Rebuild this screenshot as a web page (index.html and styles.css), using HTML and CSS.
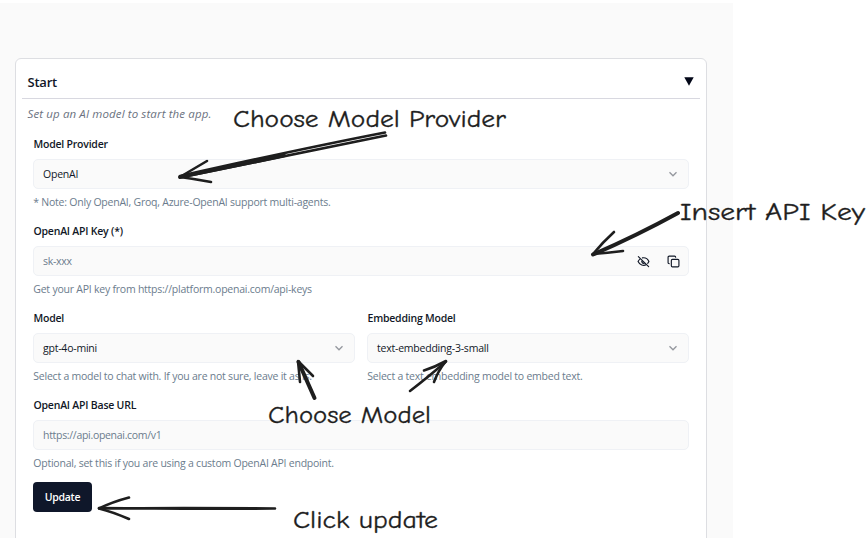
FILE: index.html
```html
<!DOCTYPE html>
<html lang="en">
<head>
<meta charset="utf-8">
<title>Start</title>
<link rel="stylesheet" href="styles.css">
</head>
<body>
<main class="page">
  <section class="card">
    <header class="card-header">
      <h1>Start</h1>
      <svg class="caret" viewBox="0 0 10 9"><path d="M.3.3h9.400L5 8.700z"/></svg>
    </header>
    <p class="intro">Set up an AI model to start the app.</p>
    <form class="fields">
      <div class="field">
        <label>Model Provider</label>
        <div class="control"><span>OpenAI</span><svg class="chevron" viewBox="0 0 10 10"><path d="M1.500 3.200 5 6.800l3.500-3.600"/></svg></div>
        <p class="hint">* Note: Only OpenAI, Groq, Azure-OpenAI support multi-agents.</p>
      </div>
      <div class="field">
        <label>OpenAI API Key (*)</label>
        <div class="control placeholder"><span>sk-xxx</span>
          <span class="tools">
            <svg class="tool" viewBox="0 0 24 24"><path d="m2.500 3 19 18.500M10 5.200C15.500 4.300 20 7.500 22 12a12 12 0 0 1-2.200 3.300M6.300 6.700A12 12 0 0 0 2 12c3 6.500 10 8.800 15.500 5.600M9.800 10a3 3 0 0 0 4.300 4.300"/></svg>
            <svg class="tool" viewBox="0 0 24 24"><rect x="8" y="8" width="14" height="14" rx="2"/><path d="M4 16c-1.100 0-2-.9-2-2V4c0-1.100.9-2 2-2h10c1.100 0 2 .9 2 2"/></svg>
          </span>
        </div>
        <p class="hint">Get your API key from https://platform.openai.com/api-keys</p>
      </div>
      <div class="columns">
        <div class="field">
          <label>Model</label>
          <div class="control"><span>gpt-4o-mini</span><svg class="chevron" viewBox="0 0 10 10"><path d="M1.500 3.200 5 6.800l3.500-3.600"/></svg></div>
          <p class="hint">Select a model to chat with. If you are not sure, leave it as is.</p>
        </div>
        <div class="field">
          <label>Embedding Model</label>
          <div class="control"><span>text-embedding-3-small</span><svg class="chevron" viewBox="0 0 10 10"><path d="M1.500 3.200 5 6.800l3.500-3.600"/></svg></div>
          <p class="hint">Select a text embedding model to embed text.</p>
        </div>
      </div>
      <div class="field">
        <label>OpenAI API Base URL</label>
        <div class="control placeholder"><span>https://api.openai.com/v1</span></div>
        <p class="hint">Optional, set this if you are using a custom OpenAI API endpoint.</p>
      </div>
      <button class="update" type="button">Update</button>
    </form>
  </section>
</main>
<svg class="annotations" viewBox="0 0 866 538">
  <g class="notes">
    <text x="233" y="126.500" textLength="273" lengthAdjust="spacingAndGlyphs">Choose Model Provider</text>
    <text x="680" y="220" textLength="185" lengthAdjust="spacingAndGlyphs">Insert API Key</text>
    <text x="268" y="423" textLength="163" lengthAdjust="spacingAndGlyphs">Choose Model</text>
    <text x="293" y="528" textLength="145" lengthAdjust="spacingAndGlyphs">Click update</text>
  </g>
  <g class="arrows">
    <path d="M385 132.500 Q300 149 180 176M386 135.500 Q290 155 180 177.500"/>
    <path class="taper" d="M284 155.500 180 177"/>
    <path d="M207 161 Q190 171 180 177 Q195 179 211 182"/>
    <path class="bold" d="M678 213 Q636 236 593 254.500"/>
    <path d="M614 232 Q603 242 593 254 Q607 253 623 251"/>
    <path class="bold" d="M314.500 398 Q307 381 298.500 362"/>
    <path d="M300 382 Q299 371 298 361L313 376"/>
    <path d="M410 391 Q427 378 446 361.500"/>
    <path d="M424 370.500 Q435 367 446 361 Q438 371 434 382"/>
    <path d="M275 508.500 Q180 507.500 99 508.500M273 508.500Q180 509 99 508"/>
    <path d="M129 497.500 Q112 502 99 508.500 Q113 512 129 519"/>
  </g>
</svg>
</body>
</html>
```
FILE: styles.css
```css
* { box-sizing: border-box; }
body {
  margin: 0;
  height: 538px;
  overflow: hidden;
  background: #fff;
  color: #111827;
  font-family: "Open Sans", "Noto Sans", sans-serif;
  font-size: 10.5px;
  letter-spacing: -0.22px;
}
h1, p { margin: 0; }
.page {
  width: 733px;
  height: 535px;
  margin-top: 3px;
  padding: 55px 26px 0 15px;
  background: #fafafa;
  overflow: hidden;
}
.card {
  height: 520px;
  padding: 0 6px;
  border: 1px solid #dddee2;
  border-radius: 6px;
  background: #fff;
}
.card-header {
  display: flex;
  align-items: center;
  justify-content: space-between;
  height: 40px;
  padding: 6px 6px 0 5.5px;
  border-bottom: 1px solid #d8d8e0;
}
h1 { font-size: 13px; font-weight: 600; line-height: 18px; }
.caret { width: 10px; height: 9px; fill: #020617; }
.intro {
  height: 34px;
  padding: 6px 0 0 5.5px;
  color: #6b7280;
  font-size: 11.5px;
  font-style: italic;
  letter-spacing: 0.12px;
  line-height: 18px;
}
.fields { padding: 3px 11px 0 11px; }
.field { height: 87px; min-width: 0; }
label { display: block; height: 23px; padding-left: 0.5px; font-weight: 600; line-height: 17px; }
.control {
  display: flex;
  align-items: center;
  justify-content: space-between;
  height: 30px;
  padding: 0 10px 0 9px;
  border: 1px solid #eff1f5;
  border-radius: 5px;
  background: #fafafa;
}
.placeholder { color: #6b7c8d; letter-spacing: -0.3px; }
.hint { margin-top: 4px; padding-left: 0.3px; color: #6b7c8d; letter-spacing: -0.23px; line-height: 18px; white-space: nowrap; }
.chevron { width: 10px; height: 10px; fill: none; stroke: #94979d; stroke-width: 1.3; }
.tools { display: flex; gap: 17px; margin-right: -2px; }
.tool {
  width: 13px;
  height: 13px;
  fill: none;
  stroke: #111827;
  stroke-width: 2.1;
  stroke-linecap: round;
  stroke-linejoin: round;
}
.columns { display: grid; grid-template-columns: 1fr 1fr; gap: 12px; }
.update {
  display: block;
  width: 59px;
  height: 30px;
  margin-top: -2px;
  padding: 0;
  border: 0;
  border-radius: 4px;
  background: #0f172a;
  color: #fff;
  font: 600 10.5px "Open Sans", sans-serif;
  letter-spacing: -0.25px;
}
.annotations { position: absolute; top: 0; left: 0; width: 866px; height: 538px; }
.notes {
  fill: #1e1e1e;
  stroke: #1e1e1e;
  stroke-width: 0.3;
  font-family: "Comic Neue", cursive, sans-serif;
  font-size: 24px;
  letter-spacing: 0;
}
.arrows { fill: none; stroke: #1e1e1e; stroke-width: 2.6; stroke-linecap: round; stroke-linejoin: round; }
.bold { stroke-width: 4; }
.taper { stroke-width: 3.8; }
```
